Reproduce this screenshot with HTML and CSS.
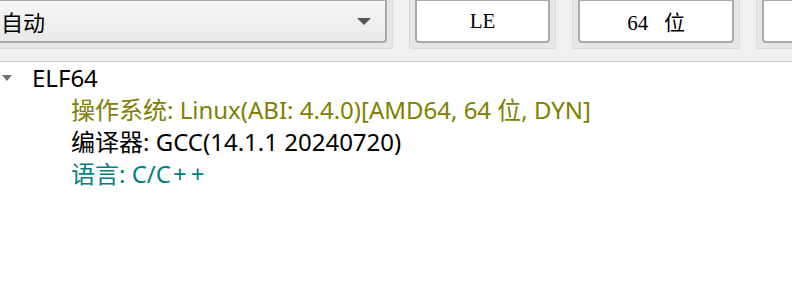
FILE: index.html
```html
<!DOCTYPE html>
<html lang="zh-CN">
<head>
  <meta charset="UTF-8" />
  <title>文件信息</title>
  <link rel="stylesheet" href="styles.css">
</head>
<body>
  <!-- Toolbar -->
  <div class="toolbar">
    <div class="frame frame-combo">
      <div class="combo">
        <span>自动</span>
        <span class="arrow"></span>
      </div>
    </div>
    <div class="frame frame-le">
      <div class="btn">LE</div>
    </div>
    <div class="frame frame-bits">
      <div class="btn">64&nbsp;&nbsp;&nbsp;位</div>
    </div>
    <div class="frame frame-last">
      <div class="btn"></div>
    </div>
  </div>
  <!-- Tree -->
  <ul class="tree">
    <li class="node">
      <div class="row"><span class="twisty"></span>ELF64</div>
      <ul class="children">
        <li class="row os">操作系统: Linux(ABI: 4.4.0)[AMD64, 64 位, DYN]</li>
        <li class="row">编译器: GCC(14.1.1 20240720)</li>
        <li class="row lang">语言: C/C<span class="plus">++</span></li>
      </ul>
    </li>
  </ul>
</body>
</html>
```

FILE: styles.css
```css
/* Reset */
* { margin: 0; padding: 0; box-sizing: border-box; }
html, body { height: 100%; background: #fff; overflow: hidden; }
body { font-family: "Noto Sans", "Noto Sans CJK SC", sans-serif; }

/* Toolbar */
.toolbar {
  display: flex;
  align-items: flex-start;
  gap: 16px;
  height: 62px;
  background: #f0f0f0;
  border-bottom: 1px solid #c8c8c8;
  overflow: hidden;
}
.frame {
  flex: none;
  padding: 0 5px 5px;
  background: #e6e6e6;
  border: 1px solid #dadada;
  border-top: none;
  border-radius: 0 0 3px 3px;
}
.frame-combo { width: 404px; margin-left: -11px; }
.frame-le { width: 147px; }
.frame-bits { width: 168px; }
.frame-last { width: 120px; }

.combo {
  height: 43px;
  display: flex;
  align-items: center;
  justify-content: space-between;
  padding: 0 14px 0 4px;
  font-size: 22px;
  color: #000;
  background: linear-gradient(#f6f6f6, #e9e9e9);
  border: 2px solid #a9a9a9;
  border-top-width: 1px;
  border-radius: 0 0 4px 4px;
}
.arrow {
  width: 0;
  height: 0;
  border-left: 7px solid transparent;
  border-right: 7px solid transparent;
  border-top: 7px solid #555;
}
.btn {
  height: 43px;
  display: flex;
  align-items: center;
  justify-content: center;
  font-family: "Liberation Serif", "Noto Sans CJK SC", serif;
  font-size: 21px;
  background: #fff;
  border: 2px solid #a9a9a9;
  border-top-width: 1px;
  border-radius: 0 0 4px 4px;
}

/* Tree */
.tree { list-style: none; font-size: 24px; }
.tree ul { list-style: none; }
.row { height: 32px; line-height: 32px; white-space: nowrap; }
.node > .row { display: flex; align-items: center; padding-left: 2px; }
.twisty {
  width: 0;
  height: 0;
  margin-right: 20px;
  border-left: 5px solid transparent;
  border-right: 5px solid transparent;
  border-top: 6px solid #707070;
}
.children { padding-left: 71px; }
.os { color: #808000; }
.lang { color: #008080; }
.plus { letter-spacing: 4px; margin-left: 2px; }
```
